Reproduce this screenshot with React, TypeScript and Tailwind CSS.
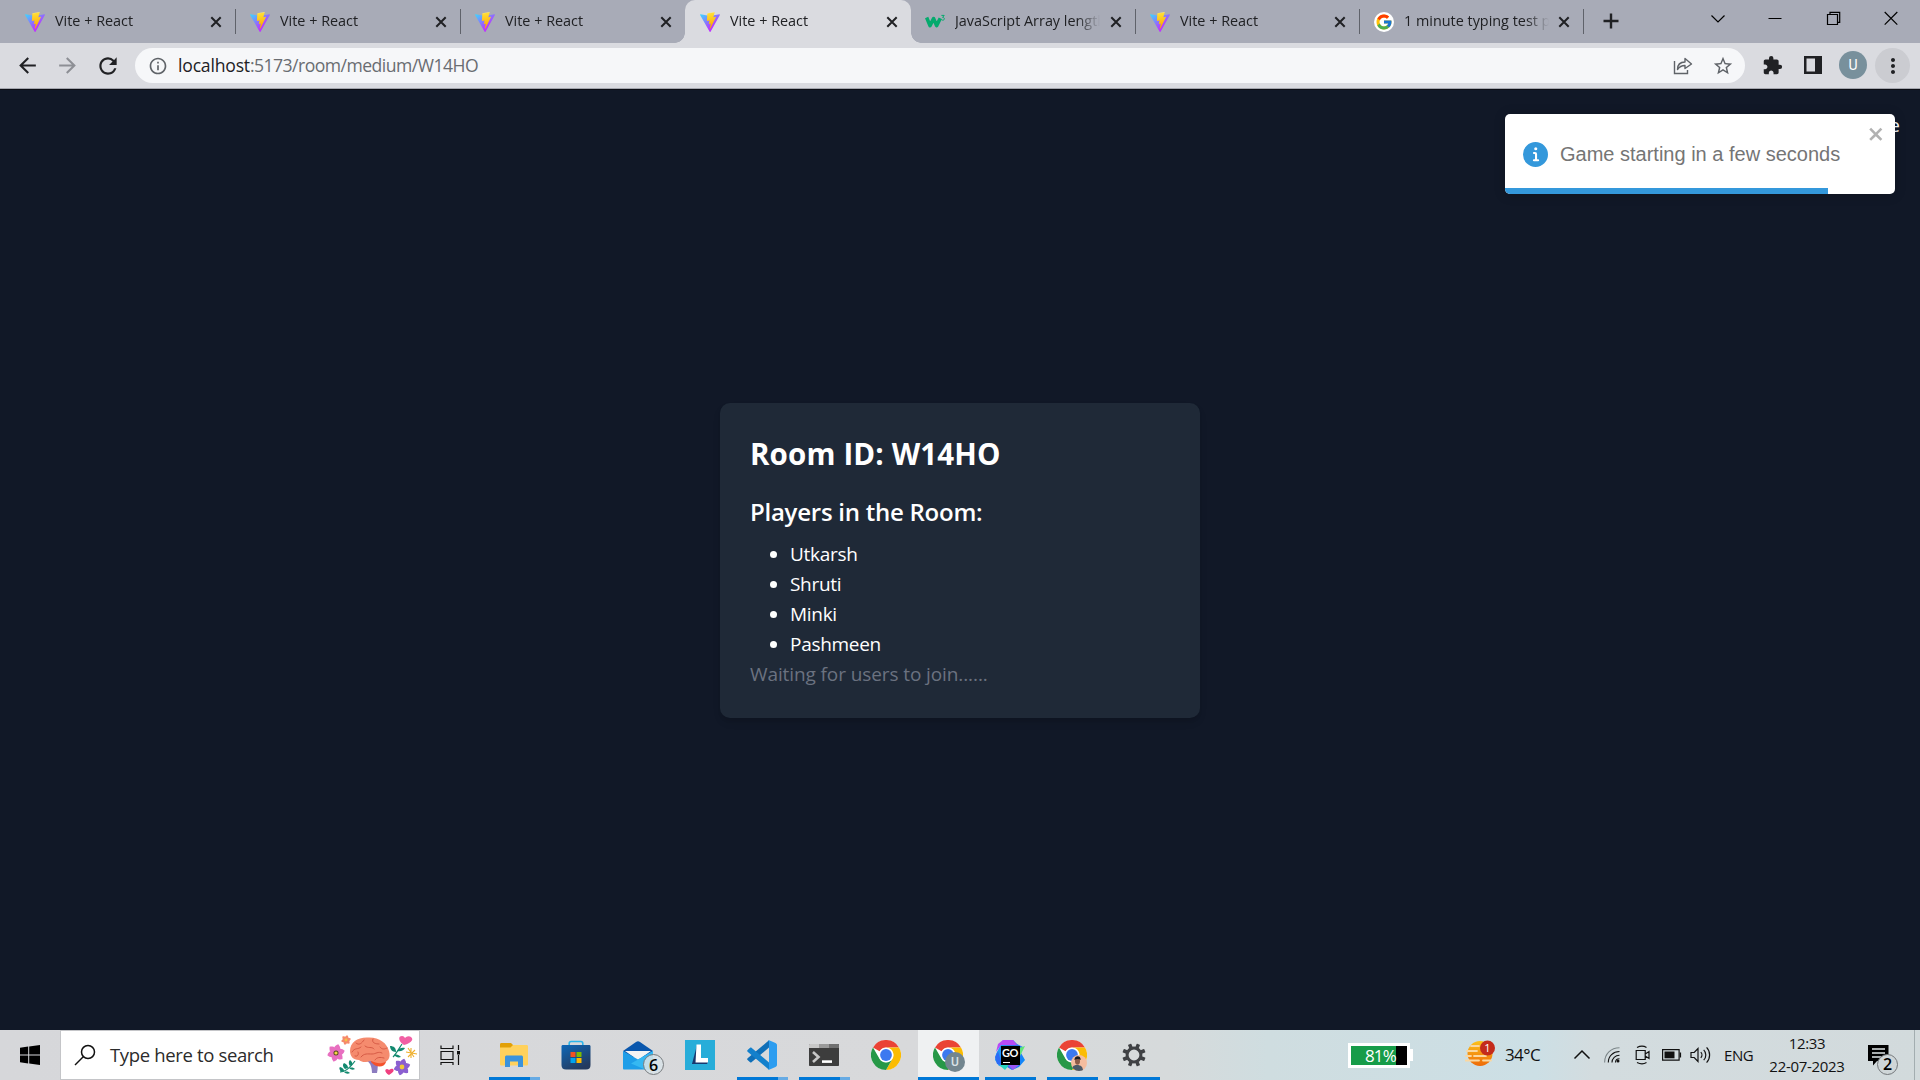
import React from "react";
import { FcGoogle } from "react-icons/fc";
import { MdArrowBack, MdArrowForward, MdExtension, MdInfoOutline, MdMoreVert, MdRefresh, MdStarBorder } from "react-icons/md";

const UI = "font-['Open_Sans',sans-serif]";

function ViteLogo() {
  return (
    <svg viewBox="0 0 256 257" className="size-5">
      <defs>
        <linearGradient id="va" x1="-.8%" x2="57.6%" y1="7.7%" y2="78.4%">
          <stop offset="0%" stopColor="#41D1FF" />
          <stop offset="100%" stopColor="#BD34FE" />
        </linearGradient>
        <linearGradient id="vb" x1="43.4%" x2="50.3%" y1="2.2%" y2="89%">
          <stop offset="0%" stopColor="#FFEA83" />
          <stop offset="8.3%" stopColor="#FFDD35" />
          <stop offset="100%" stopColor="#FFA800" />
        </linearGradient>
      </defs>
      <path fill="url(#va)" d="m255.153 37.938L134.897 252.976c-2.483 4.44-8.862 4.466-11.382.048L.875 37.958c-2.746-4.814 1.371-10.646 6.827-9.67l120.385 21.517a6.537 6.537 0 0 0 2.322-.004l117.867-21.483c5.438-.991 9.574 4.796 6.877 9.62Z" />
      <path fill="url(#vb)" d="M185.432.063L96.44 17.501a3.268 3.268 0 0 0-2.634 3.014l-5.474 92.456a3.268 3.268 0 0 0 3.997 3.378l24.777-5.718c2.318-.535 4.413 1.507 3.936 3.838l-7.361 36.047c-.495 2.426 1.782 4.5 4.151 3.78l15.304-4.649c2.372-.72 4.652 1.36 4.15 3.788l-11.698 56.621c-.732 3.542 3.979 5.473 5.943 2.437l1.313-2.028l72.516-144.72c1.215-2.423-.88-5.186-3.54-4.672l-25.505 4.922c-2.396.462-4.435-1.77-3.759-4.114l16.646-57.705c.677-2.35-1.37-4.583-3.769-4.113Z" />
    </svg>
  );
}

function W3Logo() {
  return (
    <svg viewBox="0 0 20 20" className="size-5" fill="none" stroke="#04aa6d">
      <path d="M1.6 5.5 5 13.6 8.6 6.6 11.6 13.6 15.3 6.2" strokeWidth="3.6" strokeLinejoin="round" />
      <path d="M16.4 3.4h2.8l-1.6 2c2.4 0 2.2 2.8.2 2.8-.8 0-1.3-.3-1.5-.8" strokeWidth="1" />
    </svg>
  );
}

function GoogleLogo() {
  return (
    <span className="flex size-5 items-center justify-center rounded-full bg-white">
      <FcGoogle className="size-[18px]" />
    </span>
  );
}

function Close() {
  return (
    <svg viewBox="0 0 12 12" className="size-3 shrink-0" stroke="#202124" strokeWidth="2">
      <path d="M1.3 1.3 10.7 10.7M10.7 1.3 1.3 10.7" />
    </svg>
  );
}

type TabProps = { icon: React.ReactNode; title: string; active?: boolean; sep?: boolean; width: string };

function Tab({ icon, title, active, sep = true, width }: TabProps) {
  return (
    <div className={`relative flex h-[43px] shrink-0 items-center pr-[13px] pl-[15px] ${width} ${active ? "rounded-t-[10px] bg-[#dadbe0]" : ""}`}>
      <span className="shrink-0">{icon}</span>
      <span className="-mt-[2px] ml-[10px] w-[145px] overflow-hidden whitespace-nowrap text-[14.4px] leading-5 text-[#202124] [mask-image:linear-gradient(to_right,#000_122px,transparent_145px)]">
        {title}
      </span>
      <span className="ml-auto flex">
        <Close />
      </span>
      {sep && <span className="absolute top-[9px] -right-px h-[25px] w-px bg-[#5f626a]" />}
      {active && (
        <>
          <span className="absolute bottom-0 -left-[10px] size-[10px] bg-[radial-gradient(circle_at_top_left,transparent_9.5px,#dadbe0_10px)]" />
          <span className="absolute -right-[10px] bottom-0 size-[10px] bg-[radial-gradient(circle_at_top_right,transparent_9.5px,#dadbe0_10px)]" />
        </>
      )}
    </div>
  );
}

function TabStrip() {
  return (
    <div className="flex h-[43px] bg-[#a8abb7] pl-[10px]">
      <Tab icon={<ViteLogo />} title="Vite + React" width="w-[225px]" />
      <Tab icon={<ViteLogo />} title="Vite + React" width="w-[225px]" />
      <Tab icon={<ViteLogo />} title="Vite + React" width="w-[225px]" sep={false} />
      <Tab icon={<ViteLogo />} title="Vite + React" width="w-[226px] -mr-px" active sep={false} />
      <Tab icon={<W3Logo />} title="JavaScript Array length" width="w-[225px]" />
      <Tab icon={<ViteLogo />} title="Vite + React" width="w-[224px]" />
      <Tab icon={<GoogleLogo />} title="1 minute typing test p" width="w-[224px]" />
      <svg viewBox="0 0 16 16" className="mt-[13px] ml-5 size-4" stroke="#202124" strokeWidth="2.4">
        <path d="M8 .5v15M.5 8h15" />
      </svg>
      <div className="ml-auto flex pt-[10px] pr-[21px] text-black">
        <svg viewBox="0 0 16 16" className="mr-[41px] size-4" fill="none" stroke="currentColor" strokeWidth="1.2">
          <path d="M1.5 5.500 8 12 14.5 5.500" />
        </svg>
        <svg viewBox="0 0 16 16" className="mr-[42px] size-4" stroke="currentColor">
          <path d="M1.500 8.500h13" />
        </svg>
        <svg viewBox="0 0 16 16" className="mr-[42px] size-4" fill="none" stroke="currentColor" strokeWidth="1.2">
          <path d="M2.5 4.5h10v10h-10zM5 4V2.3h9.700v10H13" />
        </svg>
        <svg viewBox="0 0 16 16" className="size-4" stroke="currentColor" strokeWidth="1.2">
          <path d="M1.7 2 14.3 14.6M14.3 2 1.7 14.6" />
        </svg>
      </div>
    </div>
  );
}

function Toolbar() {
  return (
    <div className="flex h-[47px] items-start border-b border-[#0b0d14] bg-[#dadbe0] pt-[5px] shadow-[inset_0_-1px_0_#a4a6ae]">
      <div className="flex h-[35px] w-[135px] shrink-0 items-center pl-[15px] text-[#202124]">
        <MdArrowBack className="size-[25px]" />
        <MdArrowForward className="ml-[15px] size-[25px] text-[#8d8f95]" />
        <MdRefresh className="ml-[15px] size-[26px]" />
      </div>
      <div className="flex h-[35px] w-[1610px] items-center rounded-full bg-[#f6f7f9] pl-[13px] text-[#5f6368]">
        <MdInfoOutline className="size-5" />
        <span className="-mt-px ml-[10px] text-[17.6px] leading-6 tracking-[-0.53px] text-[#696c71]">
          <span className="tracking-[-0.2px] text-[#202124]">localhost</span>:5173/room/medium/W14HO
        </span>
        <svg viewBox="0 0 20 20" className="ml-auto size-5" fill="none" stroke="currentColor" strokeWidth="1.4">
          <path d="M1.5 5v12.5h13V14" />
          <path d="M4.5 13.5c0-5 3-7.500 7.500-7.500V2.500L18.500 8 12 12.500V9.500c-3 0-5.500 1-7.500 4z" strokeLinejoin="round" />
        </svg>
        <MdStarBorder className="mr-[11px] ml-[19px] size-[22px]" />
      </div>
      <MdExtension className="mt-[7px] ml-[17px] size-[21px] text-[#202124]" />
      <svg viewBox="0 0 18 18" className="mt-2 ml-[21px] size-[18px]">
        <path d="M0 0h18v18H0zM2.500 2.500v13H11v-13z" fill="#202124" fillRule="evenodd" />
      </svg>
      <span className="mt-[3px] ml-[17px] flex size-7 items-center justify-center rounded-full bg-[#78909c] font-[Roboto] text-[14px] text-white">U</span>
      <span className="ml-2 flex size-[35px] items-center justify-center rounded-full bg-[#cbccd1] text-[#202124]">
        <MdMoreVert className="size-6" />
      </span>
    </div>
  );
}

function Toast() {
  return (
    <div className="absolute top-[24px] left-[1505px] flex h-20 w-[390px] overflow-hidden rounded-[5px] bg-white text-[#757575] shadow-[0_1px_12px_rgba(0,0,0,0.2)]">
      <svg viewBox="0 0 24 24" className="mt-[28px] ml-[18px] size-[25px] shrink-0" fill="#3498db">
        <path d="M12 0a12 12 0 1012 12A12.013 12.013 0 0012 0zm.25 5a1.5 1.5 0 11-1.500 1.500 1.500 1.500 0 011.500-1.500zm2.250 13.500h-4a1 1 0 010-2h.750a.250.250 0 00.250-.250v-4.500a.250.250 0 00-.250-.250h-.750a1 1 0 010-2h1a2 2 0 012 2v4.750a.250.250 0 00.250.250h.750a1 1 0 110 2z" />
      </svg>
      <span className="mt-[25px] ml-3 font-['Liberation_Sans',sans-serif] text-xl leading-[30px] whitespace-nowrap">Game starting in a few seconds</span>
      <svg viewBox="0 0 14 16" className="mt-[10px] mr-[10px] ml-auto h-5 w-[17.5px] shrink-0" fill="#000" opacity="0.3">
        <path fillRule="evenodd" d="M7.71 8.23l3.75 3.75-1.48 1.48-3.75-3.75-3.75 3.75L1 11.98l3.75-3.75L1 4.48 2.48 3l3.75 3.75L9.98 3l1.48 1.48-3.75 3.75z" />
      </svg>
      <span className="absolute bottom-0 left-0 h-[6px] w-[323px] bg-[#3498db]" />
    </div>
  );
}

function Page() {
  return (
    <main className="relative flex h-[940px] items-center justify-center bg-[#111827] text-white">
      <span className="absolute top-[23px] right-[20px] text-[19px] leading-6">e</span>
      <section className="mt-px h-[315px] w-[480px] rounded-[10px] bg-[#1f2937] px-[30px] pt-[31px] shadow-[0_5px_8px_-1px_rgba(0,0,0,0.1),0_3px_5px_-2px_rgba(0,0,0,0.1)]">
        <h1 className="mb-5 text-[29.5px] leading-10 font-bold tracking-[0.15px]">Room ID: W14HO</h1>
        <h2 className="mb-[10px] text-[24px] leading-[35px] font-semibold tracking-[-0.25px]">Players in the Room:</h2>
        <ul className="list-disc pl-10 text-[19px] leading-[30px] tracking-[-0.3px]">
          {["Utkarsh", "Shruti", "Minki", "Pashmeen"].map((name) => (
            <li key={name}>{name}</li>
          ))}
        </ul>
        <p className="text-[19px] leading-[30px] tracking-[-0.1px] text-[#6b7280]">Waiting for users to join......</p>
      </section>
      <Toast />
    </main>
  );
}

function Flower({ x, y, r, fill, core }: { x: number; y: number; r: number; fill: string; core: string }) {
  return (
    <g transform={`translate(${x} ${y})`}>
      {[0, 60, 120, 180, 240, 300].map((a) => (
        <path key={a} d={`M0 0C${-r * 0.55} ${-r * 0.4} ${-r * 0.35} ${-r * 0.75} 0 ${-r}C${r * 0.35} ${-r * 0.75} ${r * 0.55} ${-r * 0.4} 0 0z`} fill={fill} transform={`rotate(${a + 15})`} />
      ))}
      <circle r={r * 0.28} fill={core} />
    </g>
  );
}

function BrainArt() {
  return (
    <svg viewBox="0 0 92 42" className="h-[42px] w-[92px]" fill="none">
      <Flower x={9} y={19} r={9} fill="#e86fc0" core="#5a4a20" />
      <circle cx="9" cy="19" r="1.600" fill="#f6d743" />
      <Flower x={19} y={6} r={5} fill="#f58a6b" core="#f6c344" />
      <path d="M40 27c4 2 5 8 5 12h5c1-5 1-9 0-13z" fill="#8c7cc0" />
      <path d="M44 28c5 6 13 6 15 0v-3H44z" fill="#f4512c" />
      <path d="M23 17C23 8 31 3 41 3.500 52 3 60 9 62 17c2 7-1 11-7 12-4 1-7-1-11-2-5 1-8 2-12-1-6 0-9-4-9-9z" fill="#f58b6e" />
      <g stroke="#d65a45" strokeWidth="1" strokeLinecap="round">
        <path d="M25 18c3-5 6-2 9-5M29 9c3 3 6 0 8-3M34 23c3-4 7-3 11-3s6-3 10-1M38 12c3 3 7 0 9 3M46 5c-2 4 3 5 6 5M53 13c2 3 5 2 7 1M28 22c3 1 4-2 3-4M48 26c2-3 5-3 9-2" />
      </g>
      <path d="M13 38c5 0 10-4 15-11" stroke="#12896f" strokeWidth="1.200" />
      <path d="M14 38c-2-3-2-4-1-5 3 1 4 2 4 4zM18 35c-3-3-2-5-1-6 3 1 4 3 4 5zM23 32c-2-3-1-5 0-6 2 2 3 3 2 5zM17 38c3-1 5 0 6 1-2 1-4 1-6-1zM22 34c3-1 5 0 6 1-2 1-4 1-6-1z" fill="#12896f" />
      <path d="M66 23c3-3 5-7 9-13" stroke="#12896f" strokeWidth="1.200" />
      <path d="M69 18c-4 0-6-3-6-6 4 0 6 2 6 6zM70 17c4 1 7-1 8-3-3-1-6 0-8 3zM67 21c3-1 5 0 7 2-3 1-5 0-7-2z" fill="#12896f" />
      <path d="M77 11c-6-4-6-9-2-9 2 0 3 2 3 2s3-3 6-1c4 3-2 7-7 8z" fill="#f15fa4" />
      <path d="M84 14v10M79 18l11 2M81 23l7-7M81 14l6 9" stroke="#efb02e" strokeWidth="1.100" />
      <path d="M62 41c-5-3-4-6-2-6 1 0 2 1 2 1s2-2 4-1c2 2-1 4-4 6z" fill="#f0407f" />
      <Flower x={75} y={33} r={8.5} fill="#8b5fd0" core="#f0c93a" />
    </svg>
  );
}

function ChromeLogo() {
  return (
    <svg viewBox="0 0 30 30" className="size-[30px]">
      <circle cx="15" cy="15" r="15" fill="#fff" />
      <path d="M2 7.500A15 15 0 0 1 28 7.500H15A7.500 7.500 0 0 0 8.500 11.300z" fill="#ea4335" />
      <path d="M28 7.500A15 15 0 0 1 15 30L21.500 18.750A7.500 7.500 0 0 0 15 7.500z" fill="#fbbc04" />
      <path d="M15 30A15 15 0 0 1 2 7.500L8.500 18.750A7.500 7.500 0 0 0 21.500 18.750z" fill="#279847" />
      <circle cx="15" cy="15" r="7.200" fill="#fff" />
      <circle cx="15" cy="15" r="5.900" fill="#3c79f0" />
    </svg>
  );
}

const explorer = (
  <svg viewBox="0 0 28 24" className="h-6 w-7">
    <path d="M0 1.500C0 .5.500 0 1.500 0H11l2.500 2.500L12 5H0z" fill="#e2a007" />
    <path d="M0 4.500h10.500L13 2h13.500c1 0 1.500.5 1.500 1.500V21c0 1-.5 1.500-1.500 1.500h-25C.5 22.500 0 22 0 21z" fill="#ffd15c" />
    <path d="M5 24V14.500c0-1.500.5-2 2-2h14c1.500 0 2 .5 2 2V24h-5v-5.500h-8V24z" fill="#3b93dc" />
  </svg>
);

const store = (
  <svg viewBox="0 0 30 30" className="size-[30px]">
    <defs>
      <linearGradient id="st" x1="0" y1="0" x2=".6" y2="1">
        <stop stopColor="#0d67b8" />
        <stop offset="1" stopColor="#243a5e" />
      </linearGradient>
    </defs>
    <path d="M8.200 6V3.500c0-1.300.7-2 2-2h9.600c1.300 0 2 .7 2 2V6" fill="none" stroke="#2bb5ea" strokeWidth="1.600" />
    <path d="M.5 6.500c0-1 .5-1.500 1.500-1.500h26c1 0 1.500.5 1.500 1.500V25c0 3-1.500 4.500-4.500 4.500H5C2 29.500.5 28 .5 25z" fill="url(#st)" />
    <path d="M9.500 12h5v5h-5z" fill="#f25022" />
    <path d="M15.500 12h5v5h-5z" fill="#7fba00" />
    <path d="M9.500 18h5v5h-5z" fill="#00a4ef" />
    <path d="M15.500 18h5v5h-5z" fill="#ffb900" />
  </svg>
);

const mail = (
  <span className="relative flex size-[30px]">
    <svg viewBox="0 0 30 30" className="size-[30px]">
      <path d="M0 11 13 2c1.500-1 2.500-1 4 0l13 9-6 6H6z" fill="#0a57ad" />
      <path d="M2 11h26l-13 9z" fill="#f4f4f4" />
      <path d="M0 11v17.500c0 .5.500 1 1 1h28c.5 0 1-.5 1-1V11L15 19.500z" fill="#1e9ee8" />
      <path d="M30 11 8 23.500 22 29.500h7c.5 0 1-.5 1-1z" fill="#35b8f2" />
    </svg>
    <span className="absolute top-[14px] left-[20px] flex size-[21px] items-center justify-center rounded-full border border-[#777b7e] bg-[#d9e3e8]/85 text-[16px] leading-none font-semibold text-black">6</span>
  </span>
);

const lightshot = (
  <svg viewBox="0 0 30 30" className="size-[30px]">
    <path d="M0 0h30v30H0z" fill="#27add9" />
    <path d="M12 5 7 24h4l1-4z" fill="#17386e" />
    <path d="M7 24h15l1-2H9z" fill="#17386e" />
    <path d="M11.500 4.500H16V18h7v4.500H10.500z" fill="#fff" />
  </svg>
);

const vscode = (
  <svg viewBox="0 0 30 30" className="size-[30px]">
    <path d="M22 7.500 4.500 22.200c-.5.400-1 .4-1.400 0L.6 20c-.6-.5-.5-1.200 0-1.700L22 .3z" fill="#0f6fb8" />
    <path d="M22 22.500 4.500 7.800c-.5-.4-1-.4-1.400 0L.6 10c-.6.500-.5 1.200 0 1.700L22 29.700z" fill="#1380cc" />
    <path d="M21.500 0 28.500 3c1 .5 1.500 1.200 1.500 2.200v19.600c0 1-.5 1.700-1.500 2.200l-7 3c-.5 0 .5-.8.5-2V2c0-1.200-1-2-.5-2z" fill="#2d9df0" />
  </svg>
);

const terminal = (
  <svg viewBox="0 0 30 22" className="h-[22px] w-[30px]">
    <path d="M1 0h28c.6 0 1 .4 1 1v20c0 .6-.4 1-1 1H1c-.6 0-1-.4-1-1V1c0-.6.4-1 1-1z" fill="#3d3d3d" />
    <path d="M0 4V1c0-.6.400-1 1-1h9v4z" fill="#c8c8c8" />
    <path d="M10 0h10v4H10z" fill="#9a9a9a" />
    <path d="M20 0h9c.6 0 1 .4 1 1v3H20z" fill="#707070" />
    <path d="m4 8 5.500 5L4 18" fill="none" stroke="#c8c8c8" strokeWidth="2.600" />
    <path d="M13 16.300h10v2.600H13z" fill="#fff" />
  </svg>
);

const chromeU = (
  <span className="relative flex size-[30px]">
    <ChromeLogo />
    <span className="absolute top-[12px] left-[12px] flex size-5 items-center justify-center rounded-full bg-[#72868f] font-[Roboto] text-[12px] font-medium text-[#d9e2e6]">U</span>
  </span>
);

const goland = (
  <span className="relative flex size-[30px] items-center justify-center">
    <svg viewBox="0 0 30 30" className="absolute size-[30px]">
      <defs>
        <linearGradient id="gl" x1="0" y1=".5" x2="1" y2=".8">
          <stop stopColor="#18a3f5" />
          <stop offset=".5" stopColor="#3b6df0" />
          <stop offset="1" stopColor="#078efc" />
        </linearGradient>
      </defs>
      <path d="M8 0h10l4 4 6 3-2 6 4 7-6 7-7 3-5-3-8-1-4-6 1-6z" fill="url(#gl)" />
      <path d="M8 0h10l4 5H6l-5 7 2-8z" fill="#b74af7" />
      <path d="m24 8 6-2-5 10z" fill="#62e57a" />
      <path d="M3 11 0 17l2 7 5 1z" fill="#2c6cf5" />
      <path d="m4 25 6 5 4-5z" fill="#28d7c4" />
      <path d="m13 25 5 5 6-5z" fill="#9a58f5" />
    </svg>
    <span className="relative flex h-[19px] w-[19px] flex-col bg-black">
      <span className="pt-px text-center font-[Lato] text-[11px] leading-[11px] font-bold tracking-[-0.4px] text-white">GO</span>
      <span className="mt-[4px] ml-[2px] h-px w-[7px] bg-white" />
    </span>
  </span>
);

const chromePhoto = (
  <span className="relative flex size-[30px]">
    <ChromeLogo />
    <svg viewBox="0 0 16 16" className="absolute top-[15px] left-[14px] size-4">
      <defs>
        <clipPath id="avatar">
          <circle cx="8" cy="8" r="8" />
        </clipPath>
      </defs>
      <g clipPath="url(#avatar)">
        <path d="M0 0h16v16H0z" fill="#f4bd9f" />
        <path d="M1 16c0-4 1-6 5-6s6 2 6 6z" fill="#4a5a68" />
        <ellipse cx="6.500" cy="6" rx="2.500" ry="3.800" fill="#8c5c48" />
        <path d="M3.500 5c-.5-4.500 6.500-5.500 6.200 0-1.700-1.500-4.200-1.500-6.200 0z" fill="#1d1c20" />
      </g>
    </svg>
  </span>
);

const settings = (
  <svg viewBox="0 0 24 24" className="size-6">
    <g fill="#3f4144">
      {[22.5, 67.5, 112.5, 157.5, 202.5, 247.5, 292.5, 337.5].map((a) => (
        <rect key={a} x="10.200" y=".3" width="3.600" height="5" rx=".5" transform={`rotate(${a} 12 12)`} />
      ))}
    </g>
    <circle cx="12" cy="12" r="6.900" fill="none" stroke="#3f4144" strokeWidth="3" />
  </svg>
);

type App = { icon: React.ReactNode; state?: "open" | "multi" | "active" };

const apps: App[] = [
  { icon: explorer, state: "multi" },
  { icon: store },
  { icon: mail },
  { icon: lightshot },
  { icon: vscode, state: "multi" },
  { icon: terminal, state: "multi" },
  { icon: <ChromeLogo /> },
  { icon: chromeU, state: "active" },
  { icon: goland, state: "open" },
  { icon: chromePhoto, state: "open" },
  { icon: settings, state: "open" },
];

function AppButton({ icon, state }: App) {
  return (
    <div className={`mr-px flex h-[50px] w-[61px] shrink-0 flex-col items-center ${state === "active" ? "bg-[#eff1f2]" : ""}`}>
      <span className="flex h-[47px] items-center pt-[3px] pr-px">{icon}</span>
      {state === "active" && <span className="h-[3px] w-full bg-[#0078d7]" />}
      {state === "open" && <span className="h-[3px] w-[51px] bg-[#0078d7]" />}
      {state === "multi" && (
        <span className="flex h-[3px] w-[51px] bg-[#67abe4]">
          <span className="w-[41px] bg-[#0078d7]" />
        </span>
      )}
    </div>
  );
}

function Tray() {
  return (
    <div className="ml-auto flex h-[50px] items-center text-[#111]">
      <div className="flex items-center">
        <span className="flex h-[25px] w-[62px] border-[3px] border-white bg-black">
          <span className="flex w-[45px] items-center justify-end bg-[#169c49] text-[17px] leading-none tracking-[-0.8px] text-white">81%</span>
        </span>
        <span className="h-3 w-[3px] bg-white" />
      </div>
      <svg viewBox="0 0 30 28" className="mb-[5px] ml-[52px] h-7 w-[30px]">
        <defs>
          <linearGradient id="sun" x1="0" y1="0" x2="0" y2="1">
            <stop stopColor="#fcc21b" />
            <stop offset="1" stopColor="#ee6a08" />
          </linearGradient>
        </defs>
        <circle cx="15" cy="14.500" r="12.500" fill="url(#sun)" />
        <path d="M6 7h8M2 12h10M1 17h5M9 17h12M0 21.500h14M18 21.500h8" stroke="#fbd7a0" strokeWidth="1.800" strokeLinecap="round" />
        <circle cx="22.500" cy="9" r="7.500" fill="#c42b1c" />
        <text x="22.500" y="13" fill="#fff" fontSize="11" textAnchor="middle" fontFamily="Open Sans">1</text>
      </svg>
      <span className="ml-[10px] w-[38px] text-[17px] leading-5 tracking-[-0.6px] whitespace-nowrap">34°C</span>
      <svg viewBox="0 0 18 18" className="ml-[30px] size-[18px]" fill="none" stroke="currentColor" strokeWidth="1.500">
        <path d="m1.500 12.500 7.500-7.500 7.500 7.500" />
      </svg>
      <svg viewBox="0 0 16 16" className="ml-[13px] size-4" fill="none" stroke="currentColor" strokeWidth="1.100">
        <path d="M.6 15.500C.6 7 7 .8 15.500.8" stroke="#7c8689" />
        <path d="M4.300 15.500c0-6.300 4.900-11 11.200-11M8 15.500c0-4.200 3.300-7.300 7.500-7.300M11.500 15.500c0-2.200 1.800-3.800 4-3.800" />
        <circle cx="14" cy="14" r="1.500" fill="currentColor" stroke="none" />
      </svg>
      <svg viewBox="0 0 16 20" className="ml-[15px] h-5 w-4" fill="none" stroke="currentColor" strokeWidth="1.200">
        <path d="M1.200 5.500h9v9h-9zM10.200 9l3.800-2.500v7L10.200 11M2 2.500c3-1.500 7-1.500 9.500 0M2 17.500c3 1.500 7 1.500 9.500 0" />
      </svg>
      <svg viewBox="0 0 20 12" className="ml-[11px] h-3 w-5" fill="none" stroke="currentColor" strokeWidth="1.200">
        <path d="M.6.600h16.500v10.500H.6zM18.500 3.500v5" />
        <path d="M2.500 2.500h10v6.800h-10z" fill="currentColor" stroke="none" />
      </svg>
      <svg viewBox="0 0 22 18" className="ml-2 h-[18px] w-[22px]" fill="none" stroke="currentColor" strokeWidth="1.200">
        <path d="M1 6.500h3.200L8 2.500v13l-3.800-4H1zM10.800 6.200c1.500 1.500 1.500 4 0 5.600M13.700 3.800c2.800 2.800 2.800 7.500 0 10.400M16.600 1.400c4 4.200 4 11 0 15.200" />
      </svg>
      <span className="ml-[12px] w-[30px] text-[15px] leading-5 tracking-[-0.4px]">ENG</span>
      <div className="ml-[13px] flex w-[80px] flex-col items-center text-[15px] leading-[23px] tracking-[-0.3px] whitespace-nowrap">
        <span>12:33</span>
        <span>22-07-2023</span>
      </div>
      <div className="relative ml-[21px] size-[21px]">
        <svg viewBox="0 0 21 21" className="size-[21px]">
          <path d="M0 0h20.500v16H9l-4 4.500V16H0z" fill="#000" />
          <path d="M4 4h13M4 8h13M4 12h9" stroke="#dfe6e8" strokeWidth="1.300" />
        </svg>
        <span className="absolute top-[9px] left-[9px] flex size-[21px] items-center justify-center rounded-full border border-[#73777a] bg-[#cfd6d8] text-[16px] leading-none font-semibold text-black">2</span>
      </div>
      <span className="ml-[25px] h-full w-px bg-[#a3adb0]" />
      <span className="w-[5px]" />
    </div>
  );
}

function Taskbar() {
  return (
    <footer className="flex h-[50px] items-center bg-[linear-gradient(90deg,#d6d7da_0%,#d8d9db_48%,#d6dadb_61%,#cfdde0_66%,#ccdfe5_80%,#d3dcdf_83%,#d2dadc_100%)]">
      <div className="flex w-[60px] justify-center">
        <svg viewBox="0 0 20 20" className="size-5">
          <path d="M0 2.700 8.200 1.600v7.900H0zM9.200 1.400 20 0v9.500H9.200zM0 10.500h8.200v7.900L0 17.300zM9.200 10.500H20V20L9.200 18.600z" />
        </svg>
      </div>
      <div className="flex h-[50px] w-[360px] items-center border border-[#c4c5c8] bg-white pl-[13px]">
        <svg viewBox="0 0 22 22" className="size-[22px]" fill="none" stroke="#111" strokeWidth="1.500">
          <circle cx="14" cy="8" r="6.500" />
          <path d="M9.500 12.500 1 21" />
        </svg>
        <span className="ml-[14px] text-[18.500px] leading-6 tracking-[-0.35px] whitespace-nowrap text-[#2b2b2b]">Type here to search</span>
        <span className="ml-auto">
          <BrainArt />
        </span>
      </div>
      <svg viewBox="0 0 22 20" className="mr-[22px] ml-5 h-5 w-[22px]" fill="none" stroke="#111" strokeWidth="1.200">
        <path d="M1 .5v3h12v-3M1 6.500h12v8H1zM1 20v-2.500h12V20M18.500 0v5M18.500 10v10" />
        <path d="M17 6h3v3.500h-3z" fill="#111" stroke="none" />
      </svg>
      {apps.map((app, i) => (
        <AppButton key={i} {...app} />
      ))}
      <Tray />
    </footer>
  );
}

export default function App() {
  return (
    <div className={`h-[1080px] w-[1920px] overflow-hidden ${UI}`}>
      <TabStrip />
      <Toolbar />
      <Page />
      <Taskbar />
    </div>
  );
}
